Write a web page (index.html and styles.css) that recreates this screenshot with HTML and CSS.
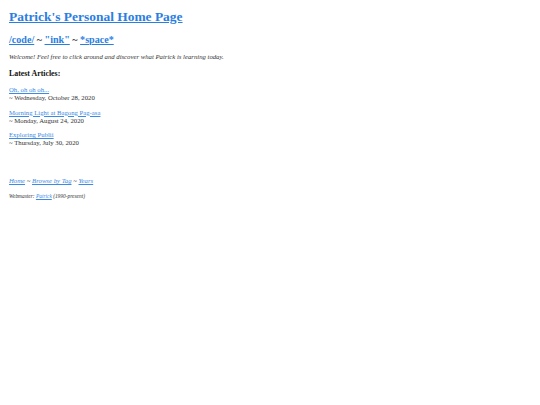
FILE: index.html
```html
<!DOCTYPE html>
<html>
<head>
<meta charset="utf-8">
<title>Patrick's Personal Home Page</title>
<link rel="stylesheet" href="styles.css">
</head>
<body>
<header class="top">
  <h1 class="title"><a href="#">Patrick's Personal Home Page</a></h1>
  <h2 class="sections"><a href="#">/code/</a> ~ <a href="#">"ink"</a> ~ <a href="#">*space*</a></h2>
  <p class="welcome">Welcome! Feel free to click around and discover what Patrick is learning today.</p>
</header>
<main class="articles">
  <h3 class="heading">Latest Articles:</h3>
  <div class="article"><a href="#">Oh, oh oh oh...</a><br>~ Wednesday, October 28, 2020</div>
  <div class="article"><a href="#">Morning Light at Bagong Pag-asa</a><br>~ Monday, August 24, 2020</div>
  <div class="article"><a href="#">Exploring Publii</a><br>~ Thursday, July 30, 2020</div>
</main>
<footer class="foot">
  <p class="nav"><a href="#">Home</a> ~ <a href="#">Browse by Tag</a> ~ <a href="#">Years</a></p>
  <p class="credit">Webmaster: <a href="#">Patrick</a> (1990-present)</p>
</footer>
</body>
</html>
```
FILE: styles.css
```css
html { background: #fff; }
body {
  margin: 0;
  padding: 9px 9px;
  font-family: "Liberation Serif", "Times New Roman", Times, serif;
  font-size: 6.72px;
  line-height: 8px;
  color: #333;
}
a { color: #3a8ae6; }
.title {
  margin: 0;
  font-size: 13.44px;
  line-height: 16px;
  font-weight: bold;
}
.title a, .sections a { color: #2a7ee2; }
.sections {
  margin: 9px 0 0;
  font-size: 10.1px;
  line-height: 12px;
  font-weight: bold;
  color: #222;
}
.welcome {
  margin: 7px 0 0;
  font-style: italic;
}
.articles { margin-top: 8px; }
.heading {
  margin: 0 0 7px;
  font-size: 7.86px;
  line-height: 10px;
  font-weight: bold;
  color: #111;
}
.article { margin-bottom: 6.5px; }
.article:last-child { margin-bottom: 0; }
.foot { margin-top: 30px; }
.nav { margin: 0; font-style: italic; }
.credit { margin: 7px 0 0; font-style: italic; font-size: 5.4px; }
```
